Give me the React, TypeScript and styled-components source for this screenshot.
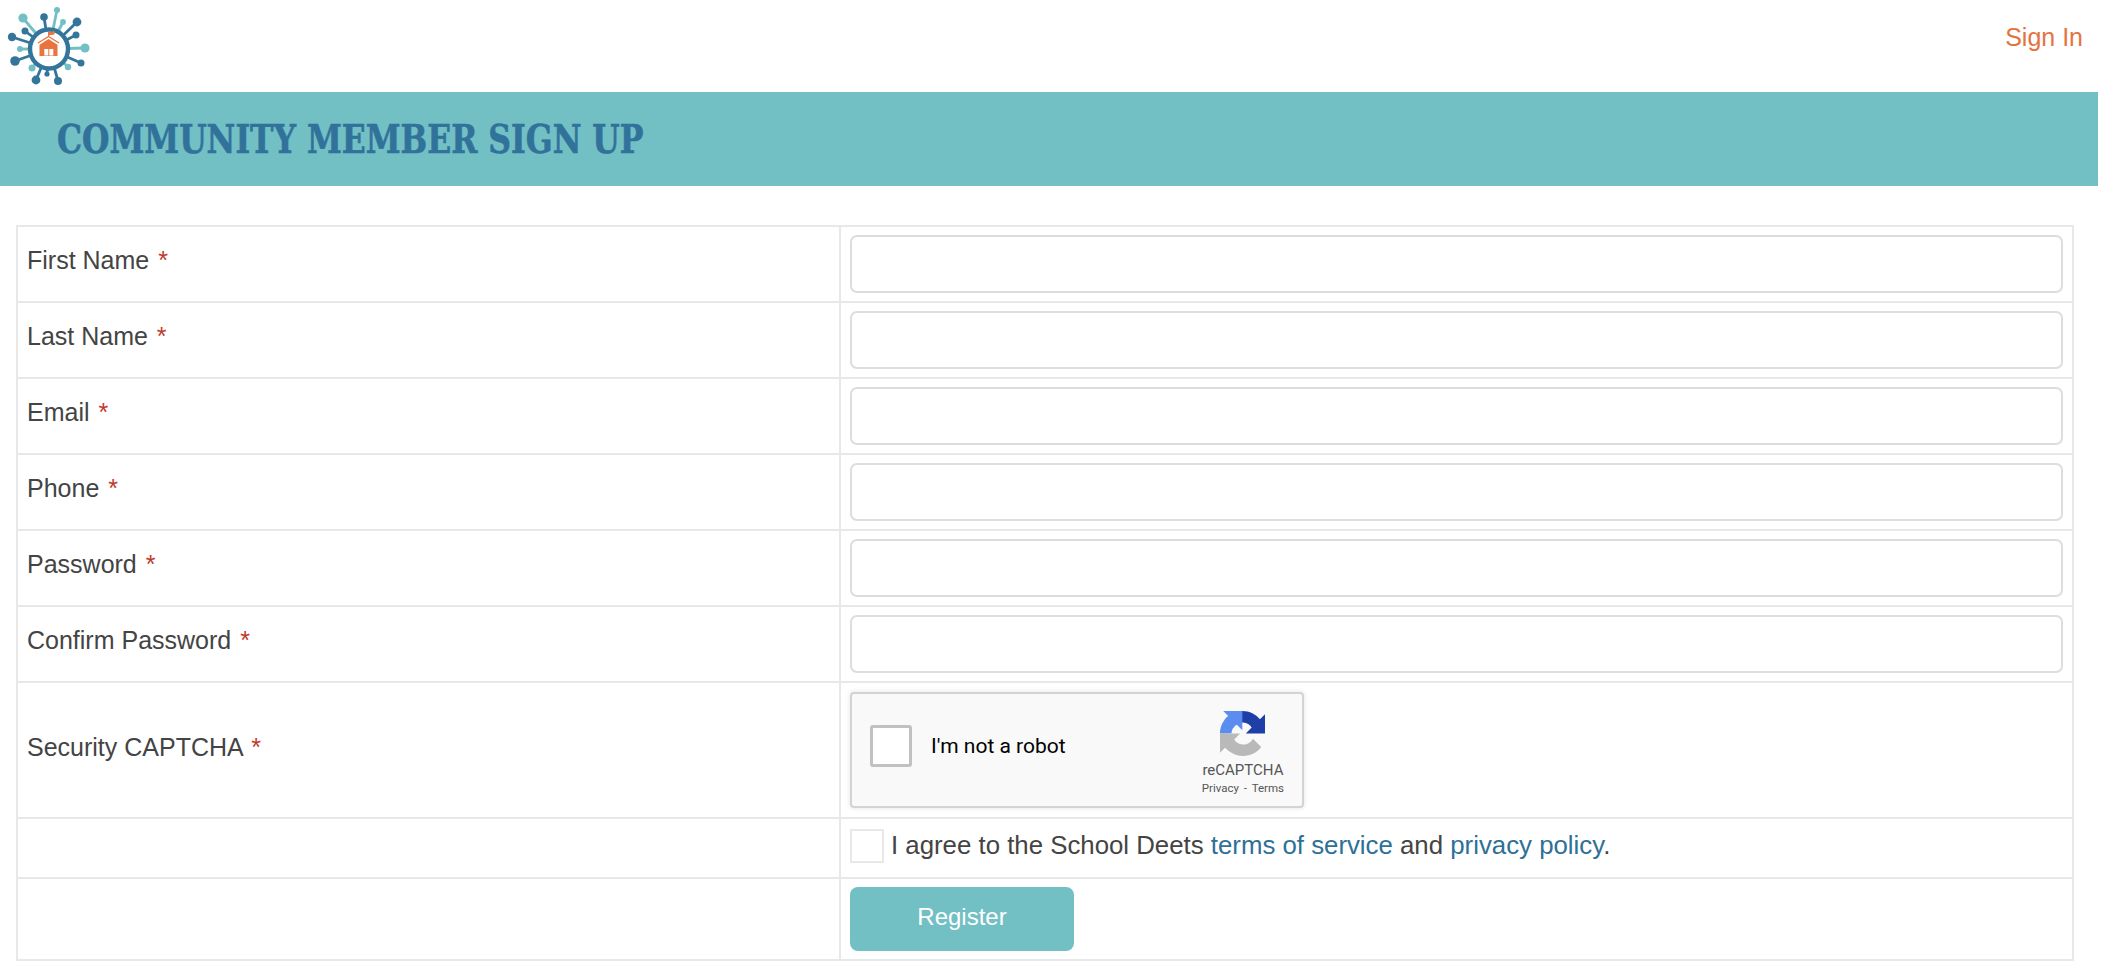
import styled, { createGlobalStyle } from 'styled-components';

const GlobalStyle = createGlobalStyle`
  html, body {
    margin: 0;
    padding: 0;
    background: #fff;
  }
  body {
    font-family: 'Liberation Sans', Arial, sans-serif;
    font-size: 25px;
    color: #444;
  }
`;

const fields = ['First Name', 'Last Name', 'Email', 'Phone', 'Password', 'Confirm Password'];

const spokes = [
  { x: 44, y: 17, r: 3.8, c: '#34769b' },
  { x: 77, y: 22, r: 4.4, c: '#34769b' },
  { x: 76, y: 35, r: 3.5, c: '#34769b' },
  { x: 81, y: 63, r: 3.5, c: '#34769b' },
  { x: 58, y: 81, r: 4, c: '#34769b' },
  { x: 47, y: 74, r: 2.6, c: '#34769b' },
  { x: 36, y: 80, r: 4.4, c: '#34769b' },
  { x: 15, y: 61, r: 4.8, c: '#34769b' },
  { x: 12, y: 37, r: 4.2, c: '#34769b' },
  { x: 25, y: 31, r: 3.5, c: '#34769b' },
  { x: 57, y: 10, r: 3, c: '#72c0c4' },
  { x: 63, y: 22, r: 2.9, c: '#72c0c4' },
  { x: 23, y: 18, r: 4.6, c: '#72c0c4' },
  { x: 85, y: 48, r: 4.6, c: '#72c0c4' },
  { x: 20, y: 49, r: 3, c: '#72c0c4' },
  { x: 32, y: 68, r: 3.5, c: '#72c0c4' },
  { x: 68, y: 67, r: 3.2, c: '#72c0c4' },
];

const Logo = () => (
  <svg width="92" height="92" viewBox="0 0 92 92">
    {spokes.map((s) => (
      <g key={`${s.x}-${s.y}`}>
        <line x1="49" y1="49" x2={s.x} y2={s.y} stroke={s.c} strokeWidth="2.8" />
        <circle cx={s.x} cy={s.y} r={s.r} fill={s.c} />
      </g>
    ))}
    <ellipse cx="49" cy="49" rx="19" ry="19.500" fill="#fff" stroke="#34769b" strokeWidth="4.400" />
    <path d="M48.500 32v5" stroke="#e8743f" strokeWidth="1" />
    <path d="M48.500 32l6-1v3.500l-6 1z" fill="#e8743f" />
    <path d="M38 43l10.500-6.500L59 43" fill="none" stroke="#e8743f" strokeWidth="1.400" />
    <path d="M48.500 39l-9 5.800V56h18V44.800z" fill="#e8743f" />
    <rect x="44.300" y="49" width="4" height="6.500" fill="#fff" />
    <rect x="49.300" y="49" width="4" height="6.500" fill="#fff" />
  </svg>
);

const RecaptchaIcon = () => (
  <svg width="45" height="45" viewBox="0 0 64 64">
    <path
      d="M64 31.955l-.033-1.37V4.687l-7.16 7.16C50.948 4.674 42.033.093 32.05.093c-10.4 0-19.622 4.96-25.458 12.64l11.736 11.86a15.55 15.55 0 0 1 4.754-5.334c2.05-1.6 4.952-2.906 8.968-2.906.485 0 .86.057 1.135.163 4.976.393 9.288 3.14 11.828 7.124l-8.307 8.307c10.522-.04 22.4-.066 27.834.002"
      fill="#1f3fa8"
    />
    <path
      d="M31.862.094l-1.37.033H4.594l7.16 7.16C4.58 13.147 0 22.06 0 32.046h16.26c0-.485.057-.86.163-1.135.393-4.976 3.14-9.288 7.124-11.828l8.307 8.307c-.04-10.522-.066-22.4.002-27.296"
      fill="#5b8def"
    />
    <path
      d="M.001 32.045l.033 1.37v25.898l7.16-7.160c7.060 7.173 15.973 11.754 25.958 11.754 10.4 0 19.622-4.96 25.458-12.64l-11.736-11.86a15.55 15.55 0 0 1-4.754 5.334c-2.05 1.6-4.952 2.906-8.968 2.906-.485 0-.86-.057-1.135-.163-4.976-.393-9.288-3.14-11.828-7.124l8.307-8.307c-10.522.04-22.4.066-27.834-.002"
      fill="#b9b9b9"
    />
  </svg>
);

export default function App() {
  return (
    <Page>
      <GlobalStyle />
      <Header>
        <Logo />
        <SignIn href="#">Sign In</SignIn>
      </Header>
      <Banner>
        <BannerTitle>COMMUNITY MEMBER SIGN UP</BannerTitle>
      </Banner>
      <FormTable>
        <LabelColumn />
        <tbody>
          {fields.map((name) => (
            <FieldRow key={name}>
              <LabelCell>
                {name} <Required>*</Required>
              </LabelCell>
              <InputCell>
                <TextInput type={name.includes('Password') ? 'password' : 'text'} />
              </InputCell>
            </FieldRow>
          ))}
          <CaptchaRow>
            <CaptchaLabelCell>
              Security CAPTCHA <Required>*</Required>
            </CaptchaLabelCell>
            <InputCell>
              <CaptchaBox>
                <CaptchaCheck />
                <CaptchaText>I'm not a robot</CaptchaText>
                <CaptchaBrand>
                  <RecaptchaIcon />
                  <BrandName>reCAPTCHA</BrandName>
                  <BrandLinks>Privacy - Terms</BrandLinks>
                </CaptchaBrand>
              </CaptchaBox>
            </InputCell>
          </CaptchaRow>
          <AgreeRow>
            <LabelCell />
            <AgreeCell>
              <AgreeLine>
                <AgreeCheck />
                <span>
                  I agree to the School Deets <TextLink href="#">terms of service</TextLink> and{' '}
                  <TextLink href="#">privacy policy</TextLink>.
                </span>
              </AgreeLine>
            </AgreeCell>
          </AgreeRow>
          <SubmitRow>
            <LabelCell />
            <InputCell>
              <RegisterButton type="button">Register</RegisterButton>
            </InputCell>
          </SubmitRow>
        </tbody>
      </FormTable>
    </Page>
  );
}

const Page = styled.div`
  width: 2098px;
  height: 972px;
  overflow: hidden;
`;

const Header = styled.div`
  display: flex;
  justify-content: space-between;
  height: 92px;
`;

const SignIn = styled.a`
  color: #e4743f;
  text-decoration: none;
  font-size: 25px;
  line-height: 29px;
  margin: 23px 15px 0 0;
`;

const Banner = styled.div`
  display: flex;
  align-items: center;
  height: 94px;
  padding-left: 57px;
  background: #72c0c4;
`;

const BannerTitle = styled.h1`
  margin: 0;
  font-family: 'DejaVu Serif Condensed', 'DejaVu Serif', serif;
  font-size: 39px;
  font-weight: 700;
  color: #31729b;
  -webkit-text-stroke: 0.6px #31729b;
  transform: scaleX(0.897);
  transform-origin: left center;
`;

const FormTable = styled.table`
  width: 2058px;
  margin: 39px 0 0 16px;
  border-collapse: collapse;
  table-layout: fixed;
  border: 2px solid #e8e8e8;
`;

const LabelColumn = styled.col`
  width: 823px;
`;

const FieldRow = styled.tr`
  height: 76px;
`;

const CaptchaRow = styled.tr`
  height: 136px;
`;

const AgreeRow = styled.tr`
  height: 60px;
`;

const SubmitRow = styled.tr`
  height: 82px;
`;

const LabelCell = styled.td`
  padding: 0 0 8px 9px;
  border: 2px solid #e8e8e8;
  vertical-align: middle;
`;

const CaptchaLabelCell = styled(LabelCell)`
  padding-bottom: 6px;
`;

const InputCell = styled.td`
  padding: 0 9px;
  border: 2px solid #e8e8e8;
  vertical-align: middle;
`;

const AgreeCell = styled(InputCell)`
  padding-bottom: 5px;
`;

const Required = styled.span`
  margin-left: 2px;
  color: #c0392b;
`;

const TextInput = styled.input`
  display: block;
  box-sizing: border-box;
  width: 100%;
  height: 58px;
  border: 2px solid #ddd;
  border-radius: 7px;
  background: #fff;
`;

const CaptchaBox = styled.div`
  display: flex;
  align-items: center;
  box-sizing: border-box;
  width: 454px;
  height: 116px;
  padding: 0 18px;
  background: #f9f9f9;
  border: 2px solid #d3d3d3;
  border-radius: 4px;
  box-shadow: 0 0 4px 1px rgba(0, 0, 0, 0.08);
`;

const CaptchaCheck = styled.div`
  box-sizing: border-box;
  width: 42px;
  height: 42px;
  margin-bottom: 8px;
  background: #fff;
  border: 3px solid #c1c1c1;
  border-radius: 3px;
`;

const CaptchaText = styled.div`
  margin: 0 0 8px 19px;
  font-family: Roboto, sans-serif;
  font-size: 21px;
  color: #000;
`;

const CaptchaBrand = styled.div`
  display: flex;
  flex-direction: column;
  align-items: center;
  margin: 5px 0 0 auto;
  color: #555;
  font-family: Roboto, sans-serif;
`;

const BrandName = styled.div`
  margin-top: 5px;
  font-size: 15px;
  line-height: 18px;
`;

const BrandLinks = styled.div`
  margin-top: 2px;
  font-size: 11.500px;
  line-height: 14px;
  word-spacing: 2px;
`;

const AgreeLine = styled.div`
  display: flex;
  align-items: center;
  gap: 7px;
  font-size: 25.800px;
`;

const AgreeCheck = styled.div`
  box-sizing: border-box;
  width: 34px;
  height: 34px;
  background: #fff;
  border: 2px solid #e8e8e8;
`;

const TextLink = styled.a`
  color: #2e7096;
  text-decoration: none;
`;

const RegisterButton = styled.button`
  display: block;
  width: 224px;
  height: 64px;
  padding: 0 0 4px;
  border: 0;
  border-radius: 8px;
  background: #72c0c4;
  color: #fff;
  font-family: 'Liberation Sans', Arial, sans-serif;
  font-size: 24px;
`;
